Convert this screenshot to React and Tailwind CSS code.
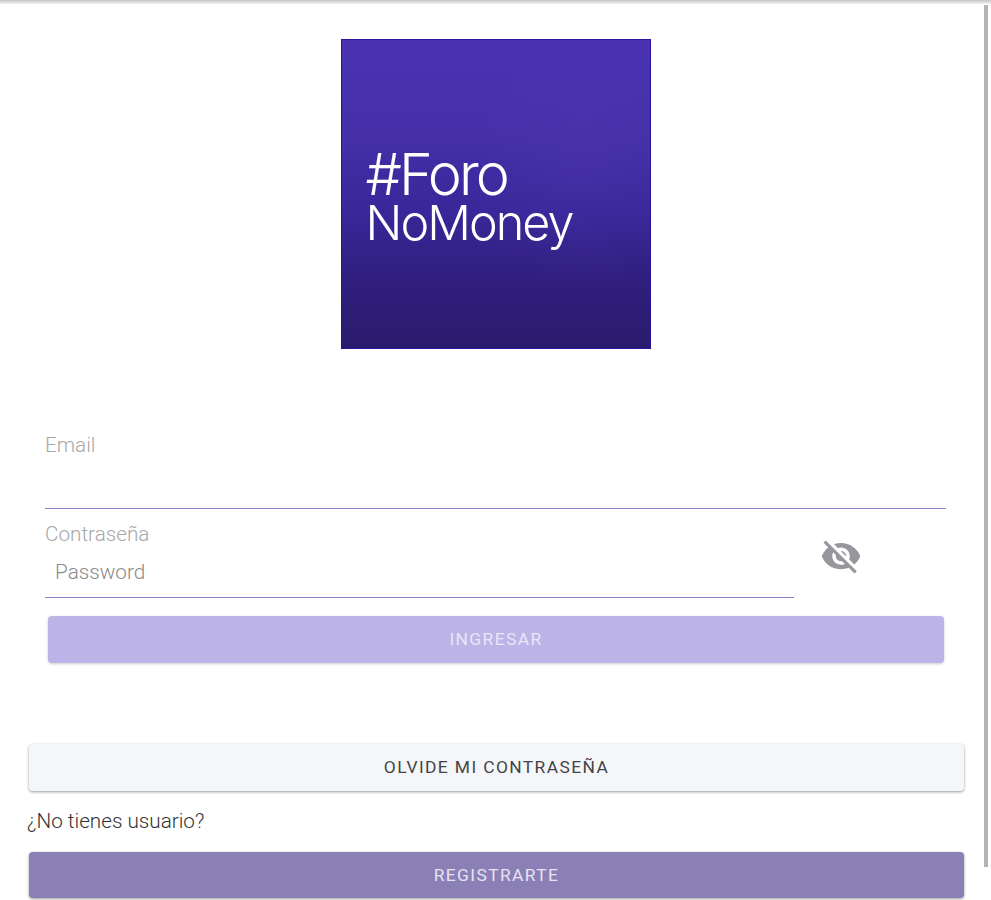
import React from 'react';
import { IoMdEyeOff } from 'react-icons/io';

const App = () => {
    return (
        <div className="relative h-[900px] w-[991px] overflow-hidden bg-white font-['Roboto',sans-serif]">
            {/* Top shadow */}
            <div className="h-[4px] bg-gradient-to-b from-[#c4c4c4] to-[#f4f4f4]"></div>

            {/* Scrollbar */}
            <div className="absolute left-[984px] top-[5px] h-[862px] w-[4px] bg-[#b4b4b4]"></div>

            {/* Logo */}
            <div className="mt-[35px] flex justify-center">
                <div className="flex h-[310px] w-[310px] flex-col border border-[#2a14a0] bg-[radial-gradient(circle_at_78%_42%,rgba(110,80,200,0.1),transparent_40%),linear-gradient(to_bottom,#4a32b2_0%,#4530a8_30%,#3a279a_55%,#2f1e7c_80%,#2b1b6c_100%)] pl-[24px] pt-[106px] font-['Inter',sans-serif] font-light text-white">
                    <p className="text-[57.5px] leading-[56px] tracking-[-0.05em]">#Foro</p>
                    <p className="text-[48.5px] leading-[42px] tracking-[-0.04em]">NoMoney</p>
                </div>
            </div>

            {/* Form */}
            <div className="ml-[45px] mt-[84px] w-[901px] font-light">
                <div className="h-[76px] border-b border-[#8f82cc]">
                    <label className="block text-[20.7px] leading-[24px] text-[#a8a8a8]">Email</label>
                </div>
                <div className="mt-[13px] flex w-[901px]">
                    <div className="h-[76px] w-[749px] border-b border-[#8f82cc]">
                        <label className="block text-[20.7px] leading-[24px] text-[#a8a8a8]">Contraseña</label>
                        <p className="ml-[10px] mt-[14px] text-[20.7px] leading-[24px] text-[#8a8a8a]">Password</p>
                    </div>
                    <div className="ml-[25px] mt-[13px]">
                        <IoMdEyeOff className="h-[44px] w-[44px] text-[#96969c]" />
                    </div>
                </div>
            </div>

            <button className="ml-[48px] mt-[18px] block h-[47px] w-[896px] rounded bg-[#bcb3e6] text-[17.4px] uppercase tracking-[0.08em] text-[#e9e6f8] shadow-[0_1px_3px_rgba(0,0,0,0.2)]">
                Ingresar
            </button>

            <button className="ml-[29px] mt-[81px] block h-[47px] w-[935px] rounded bg-[#f4f6f9] text-[17.4px] uppercase tracking-[0.08em] text-[#444444] shadow-[0_1px_3px_rgba(0,0,0,0.4)]">
                Olvide mi contraseña
            </button>

            <p className="ml-[27px] mt-[18px] text-[20.7px] font-light leading-[24px] text-[#333333]">¿No tienes usuario?</p>

            <button className="ml-[29px] mt-[19px] block h-[46px] w-[935px] rounded bg-[#8b80b6] text-[17.4px] uppercase tracking-[0.08em] text-[#e6e3f2] shadow-[0_1px_3px_rgba(0,0,0,0.4)]">
                Registrarte
            </button>
        </div>
    );
};

export default App;
